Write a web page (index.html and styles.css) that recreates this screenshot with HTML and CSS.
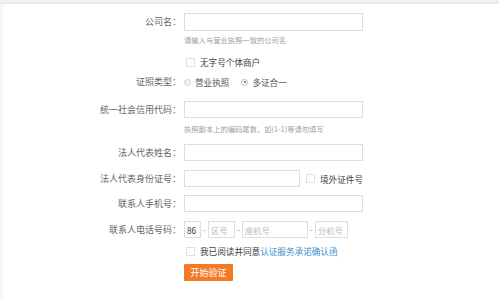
FILE: index.html
```html
<!DOCTYPE html>
<html lang="zh-CN">
<head>
<meta charset="utf-8">
<title>认证</title>
<link rel="stylesheet" href="styles.css">
</head>
<body>
<div class="topbar"></div>
<div class="page">
  <form class="form">
    <div class="row r-first">
      <label class="lbl">公司名：</label>
      <div class="ctl"><span class="inp w-full"></span></div>
    </div>
    <div class="row r-hint1">
      <span class="lbl"></span>
      <div class="ctl hint">请输入与营业执照一致的公司名</div>
    </div>
    <div class="row r-cb">
      <span class="lbl"></span>
      <div class="ctl"><span class="cb"></span><span class="txt dark">无字号个体商户</span></div>
    </div>
    <div class="row r-radio">
      <label class="lbl">证照类型：</label>
      <div class="ctl">
        <span class="radio"></span><span class="txt">营业执照</span>
        <span class="radio on sp"></span><span class="txt">多证合一</span>
      </div>
    </div>
    <div class="row r-in2">
      <label class="lbl">统一社会信用代码：</label>
      <div class="ctl"><span class="inp w-full"></span></div>
    </div>
    <div class="row r-hint2">
      <span class="lbl"></span>
      <div class="ctl hint">执照副本上的编码尾数，如(1-1)等请勿填写</div>
    </div>
    <div class="row r-in3">
      <label class="lbl">法人代表姓名：</label>
      <div class="ctl"><span class="inp w-full"></span></div>
    </div>
    <div class="row r-in4">
      <label class="lbl">法人代表身份证号：</label>
      <div class="ctl"><span class="inp w-id"></span><span class="cb sp2"></span><span class="txt dark">境外证件号</span></div>
    </div>
    <div class="row r-in5">
      <label class="lbl">联系人手机号：</label>
      <div class="ctl"><span class="inp w-full"></span></div>
    </div>
    <div class="row r-in6">
      <label class="lbl">联系人电话号码：</label>
      <div class="ctl phone">
        <span class="inp w-cc val">86</span><span class="dash">-</span>
        <span class="inp w-area ph">区号</span><span class="dash">-</span>
        <span class="inp w-num ph">座机号</span><span class="dash">-</span>
        <span class="inp w-ext ph">分机号</span>
      </div>
    </div>
    <div class="row r-agree">
      <span class="lbl"></span>
      <div class="ctl"><span class="cb"></span><span class="txt dark">我已阅读并同意</span><a class="link">认证服务承诺确认函</a></div>
    </div>
    <div class="row r-btn">
      <span class="lbl"></span>
      <div class="ctl"><span class="btn">开始验证</span></div>
    </div>
  </form>
</div>
</body>
</html>
```
FILE: styles.css
```css
html, body {
  margin: 0;
  padding: 0;
  background: #ffffff;
  font-family: "Noto Sans CJK SC", "Noto Sans", sans-serif;
}
.topbar {
  height: 3px;
  background: #efefef;
  border-bottom: 1px solid #e6e6e6;
}
.page {
  border-left: 3px solid #f6f6f6;
  height: 294px;
  box-sizing: border-box;
}
.form {
  display: flex;
  flex-direction: column;
}
.row {
  display: flex;
  align-items: center;
}
.lbl {
  width: 181px;
  flex: none;
  text-align: right;
  font-size: 9px;
  color: #666;
  line-height: 12px;
  margin-left: -3px;
}
.ctl {
  margin-left: 3px;
  display: flex;
  align-items: center;
  height: 100%;
}
.r-first { margin-top: 9px; height: 18px; }
.r-hint1 { margin-top: 4px; height: 10px; }
.r-cb { margin-top: 11px; height: 12px; }
.r-radio { margin-top: 8px; height: 12px; }
.r-in2 { margin-top: 13px; height: 17px; }
.r-hint2 { margin-top: 6px; height: 10px; }
.r-in3 { margin-top: 10px; height: 17px; }
.r-in4 { margin-top: 9px; height: 17px; }
.r-in5 { margin-top: 8px; height: 17px; }
.r-in6 { margin-top: 9px; height: 17px; }
.r-agree { margin-top: 7px; height: 12px; }
.r-btn { margin-top: 7px; height: 17px; }

.inp {
  display: flex;
  align-items: center;
  box-sizing: border-box;
  height: 100%;
  border: 1px solid #dedede;
  background: #fff;
  font-size: 8.3px;
  padding-left: 2px;
}
.w-full { width: 179px; }
.w-id { width: 116px; }
.w-cc { width: 17px; }
.w-area { width: 27px; }
.w-num { width: 66px; }
.w-ext { width: 33px; }
.val { color: #333; }
.ph { color: #bbb; }
.dash {
  font-size: 8px;
  color: #888;
  width: 7px;
  text-align: center;
}
.hint {
  font-size: 7.3px;
  color: #a0a0a0;
  line-height: 10px;
}
.txt {
  font-size: 8.6px;
  color: #555;
  line-height: 12px;
}
.dark { color: #444; }
.cb {
  width: 7px;
  height: 7px;
  border: 1px solid #e0e0e0;
  background: #fff;
  margin: 0 5px 0 2px;
  flex: none;
}
.sp2 { margin-left: 6px; }
.radio {
  width: 7px;
  height: 7px;
  border-radius: 50%;
  border: 1px solid #cfcfcf;
  background: #f3f3f3;
  margin: 0 4px 0 0;
  flex: none;
  box-sizing: border-box;
  position: relative;
}
.radio.on {
  background: #fff;
  border-color: #bbb;
}
.radio.on::after {
  content: "";
  position: absolute;
  left: 1.5px;
  top: 1.5px;
  width: 2px;
  height: 2px;
  border-radius: 50%;
  background: #666;
}
.sp { margin-left: 12px; }
.link {
  font-size: 8.6px;
  color: #3b8fd0;
  line-height: 12px;
}
.btn {
  display: flex;
  align-items: center;
  justify-content: center;
  width: 49px;
  height: 17px;
  background: #f47a2a;
  color: #fff;
  font-size: 9px;
  border-radius: 1px;
}
```
